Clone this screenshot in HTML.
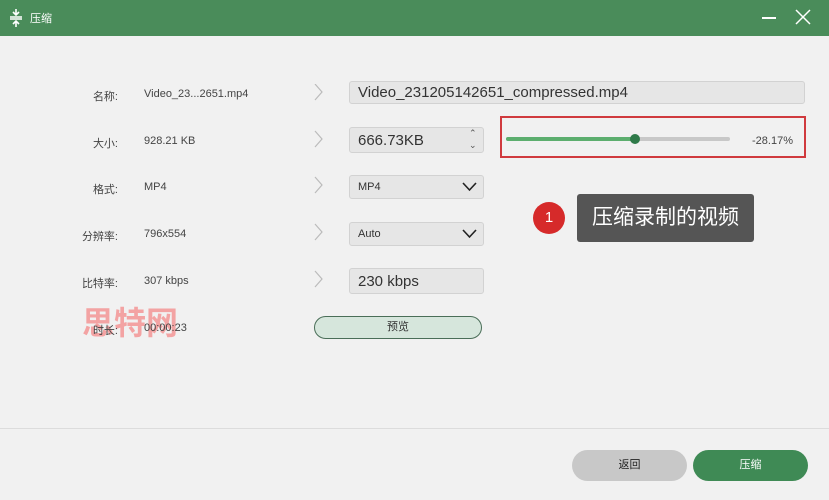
<!DOCTYPE html>
<html><head><meta charset="utf-8"><style>
*{margin:0;padding:0;box-sizing:border-box}
body{width:829px;height:500px;background:#f1f1f1;font-family:"Liberation Sans","Noto Sans CJK SC",sans-serif;position:relative;overflow:hidden;color:#333}
.a{position:absolute}
.tb{left:0;top:0;width:829px;height:36px;background:#4a8c5a}
.lbl{font-size:11px;color:#444;text-align:right;width:60px;left:58px}
.val{font-size:11px;color:#444;left:144px}
.box{background:#e6e6e6;border:1px solid #d2d2d2;border-radius:3px;font-size:15px;color:#333;padding-left:8px;display:flex;align-items:center}
.sel{font-size:11px}
</style></head><body>
<div class="a tb"></div>
<svg class="a" style="left:8px;top:8px" width="16" height="20" viewBox="0 0 16 20"><path d="M8 1v5M5 4l3 3 3-3M8 19v-5M5 16l3-3 3 3M2 9h12M2 11h12" stroke="#fff" stroke-width="1.6" fill="none"/></svg>
<div class="a" style="left:30px;top:10px;font-size:11px;color:#fff">压缩</div>
<div class="a" style="left:762px;top:17px;width:14px;height:1.5px;background:#fff"></div>
<svg class="a" style="left:795px;top:9px" width="16" height="16"><path d="M1 1L15 15M15 1L1 15" stroke="#fff" stroke-width="1.5"/></svg>

<svg class="a" style="left:313px;top:84px" width="12" height="250"><g stroke="#bbb" stroke-width="1.2" fill="none"><path d="M2 0l7 8-7 8"/><path d="M2 47l7 8-7 8"/><path d="M2 93l7 8-7 8"/><path d="M2 140l7 8-7 8"/><path d="M2 187l7 8-7 8"/></g></svg>

<div class="a lbl" style="top:88px">名称:</div><div class="a val" style="top:88px">Video_23...2651.mp4</div>
<div class="a box" style="left:349px;top:81px;width:456px;height:23px">Video_231205142651_compressed.mp4</div>

<div class="a lbl" style="top:135px">大小:</div><div class="a val" style="top:135px">928.21 KB</div>
<div class="a box" style="left:349px;top:127px;width:135px;height:26px">666.73KB</div>
<div class="a" style="left:469px;top:127px;font-size:9px;color:#555;line-height:12px">&#8963;<br>&#8964;</div>

<div class="a" style="left:500px;top:116px;width:306px;height:42px;border:2px solid #d03a3e"></div>
<div class="a" style="left:506px;top:137px;width:224px;height:4px;background:#c8c8c8;border-radius:2px"></div>
<div class="a" style="left:506px;top:137px;width:130px;height:4px;background:#5cae6e;border-radius:2px"></div>
<div class="a" style="left:630px;top:134px;width:10px;height:10px;background:#2f7a49;border-radius:50%"></div>
<div class="a" style="left:752px;top:135px;font-size:11px;color:#444">-28.17%</div>

<div class="a lbl" style="top:181px">格式:</div><div class="a val" style="top:181px">MP4</div>
<div class="a box sel" style="left:349px;top:175px;width:135px;height:24px">MP4</div>
<svg class="a" style="left:462px;top:182px" width="15" height="10"><path d="M1 1l6.5 7 6.5-7" stroke="#222" stroke-width="1.6" fill="none"/></svg>

<div class="a lbl" style="top:228px">分辨率:</div><div class="a val" style="top:228px">796x554</div>
<div class="a box sel" style="left:349px;top:222px;width:135px;height:24px">Auto</div>
<svg class="a" style="left:462px;top:229px" width="15" height="10"><path d="M1 1l6.5 7 6.5-7" stroke="#222" stroke-width="1.6" fill="none"/></svg>

<div class="a lbl" style="top:275px">比特率:</div><div class="a val" style="top:275px">307 kbps</div>
<div class="a box" style="left:349px;top:268px;width:135px;height:26px">230 kbps</div>

<div class="a" style="left:82px;top:298px;font-size:32px;font-weight:bold;color:#f3a3a3;letter-spacing:0px">思特网</div>
<div class="a lbl" style="top:322px">时长:</div><div class="a val" style="top:322px">00:00:23</div>
<div class="a" style="left:314px;top:316px;width:168px;height:23px;border:1px solid #4a6e58;border-radius:12px;background:#d6e6dc;font-size:11px;text-align:center;line-height:21px">预览</div>

<div class="a" style="left:533px;top:202px;width:32px;height:32px;border-radius:50%;background:#d62a2a;color:#fff;font-size:15px;text-align:center;line-height:32px">1</div>
<div class="a" style="left:571px;top:212px;width:0;height:0;border:6px solid transparent;border-right-color:#555"></div>
<div class="a" style="left:577px;top:194px;width:177px;height:48px;background:#555;border-radius:3px;color:#fff;font-size:21px;line-height:48px;text-align:center">压缩录制的视频</div>

<div class="a" style="left:0;top:428px;width:829px;height:1px;background:#dcdcdc"></div>
<div class="a" style="left:572px;top:450px;width:115px;height:31px;border-radius:16px;background:#c8c8c8;font-size:11px;text-align:center;line-height:31px;color:#222">返回</div>
<div class="a" style="left:693px;top:450px;width:115px;height:31px;border-radius:16px;background:#3f8a55;font-size:11px;text-align:center;line-height:31px;color:#fff">压缩</div>
</body></html>
